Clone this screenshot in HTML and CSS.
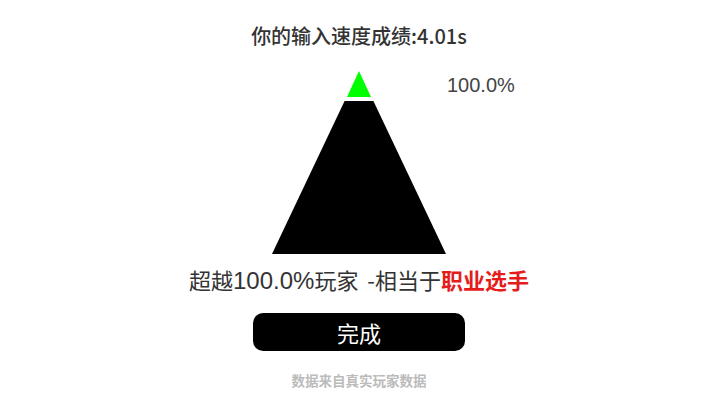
FILE: index.html
```html
<!DOCTYPE html>
<html lang="zh">
<head>
<meta charset="utf-8">
<link rel="stylesheet" href="styles.css">
</head>
<body>
<main class="page">
  <h1 class="title">你的输入速度成绩:4.01s</h1>
  <div class="pyramid">
    <svg class="pyramid-svg" width="180" height="186" viewBox="0 0 180 186">
      <polygon points="90,1 78,27 102,27" fill="#00ff00"/>
      <polygon points="75.6,31 104.4,31 177,184 3,184" fill="#000"/>
    </svg>
    <span class="pct">100.0%</span>
  </div>
  <p class="result">超越<span class="num">100.0%</span>玩家 -相当于<strong class="rank">职业选手</strong></p>
  <button class="done">完成</button>
  <p class="note">数据来自真实玩家数据</p>
</main>
</body>
</html>
```
FILE: styles.css
```css
html, body {
  margin: 0;
  padding: 0;
  background: #fff;
}
body {
  font-family: "Noto Sans CJK SC", sans-serif;
  width: 720px;
  height: 404px;
  overflow: hidden;
}
.page {
  display: flex;
  flex-direction: column;
  align-items: center;
  padding-top: 24px;
  padding-right: 2px;
}
.title {
  margin: 0;
  font-size: 20px;
  line-height: 24px;
  font-weight: 500;
  color: #333;
}
.pyramid {
  position: relative;
  margin-top: 22px;
  width: 180px;
  height: 186px;
}
.pyramid-svg {
  display: block;
}
.pct {
  position: absolute;
  left: 178px;
  top: 3px;
  font-family: "Liberation Sans", Arial, sans-serif;
  font-size: 20px;
  line-height: 24px;
  color: #444;
  white-space: nowrap;
}
.result {
  margin: 8px 0 0;
  height: 30px;
  font-size: 22px;
  line-height: 30px;
  color: #333;
  word-spacing: 4px;
}
.num {
  font-family: "Liberation Sans", Arial, sans-serif;
  font-size: 24px;
  line-height: 1;
}
.rank {
  color: #e51c1c;
  font-weight: 700;
}
.done {
  margin-top: 19px;
  width: 212px;
  height: 38px;
  border: none;
  border-radius: 10px;
  background: #000;
  color: #fff;
  font-family: inherit;
  font-size: 22px;
  line-height: 38px;
  padding: 0;
}
.note {
  margin: 19px 0 0;
  font-size: 13.5px;
  line-height: 20px;
  font-weight: 700;
  color: #bbb;
}
```
